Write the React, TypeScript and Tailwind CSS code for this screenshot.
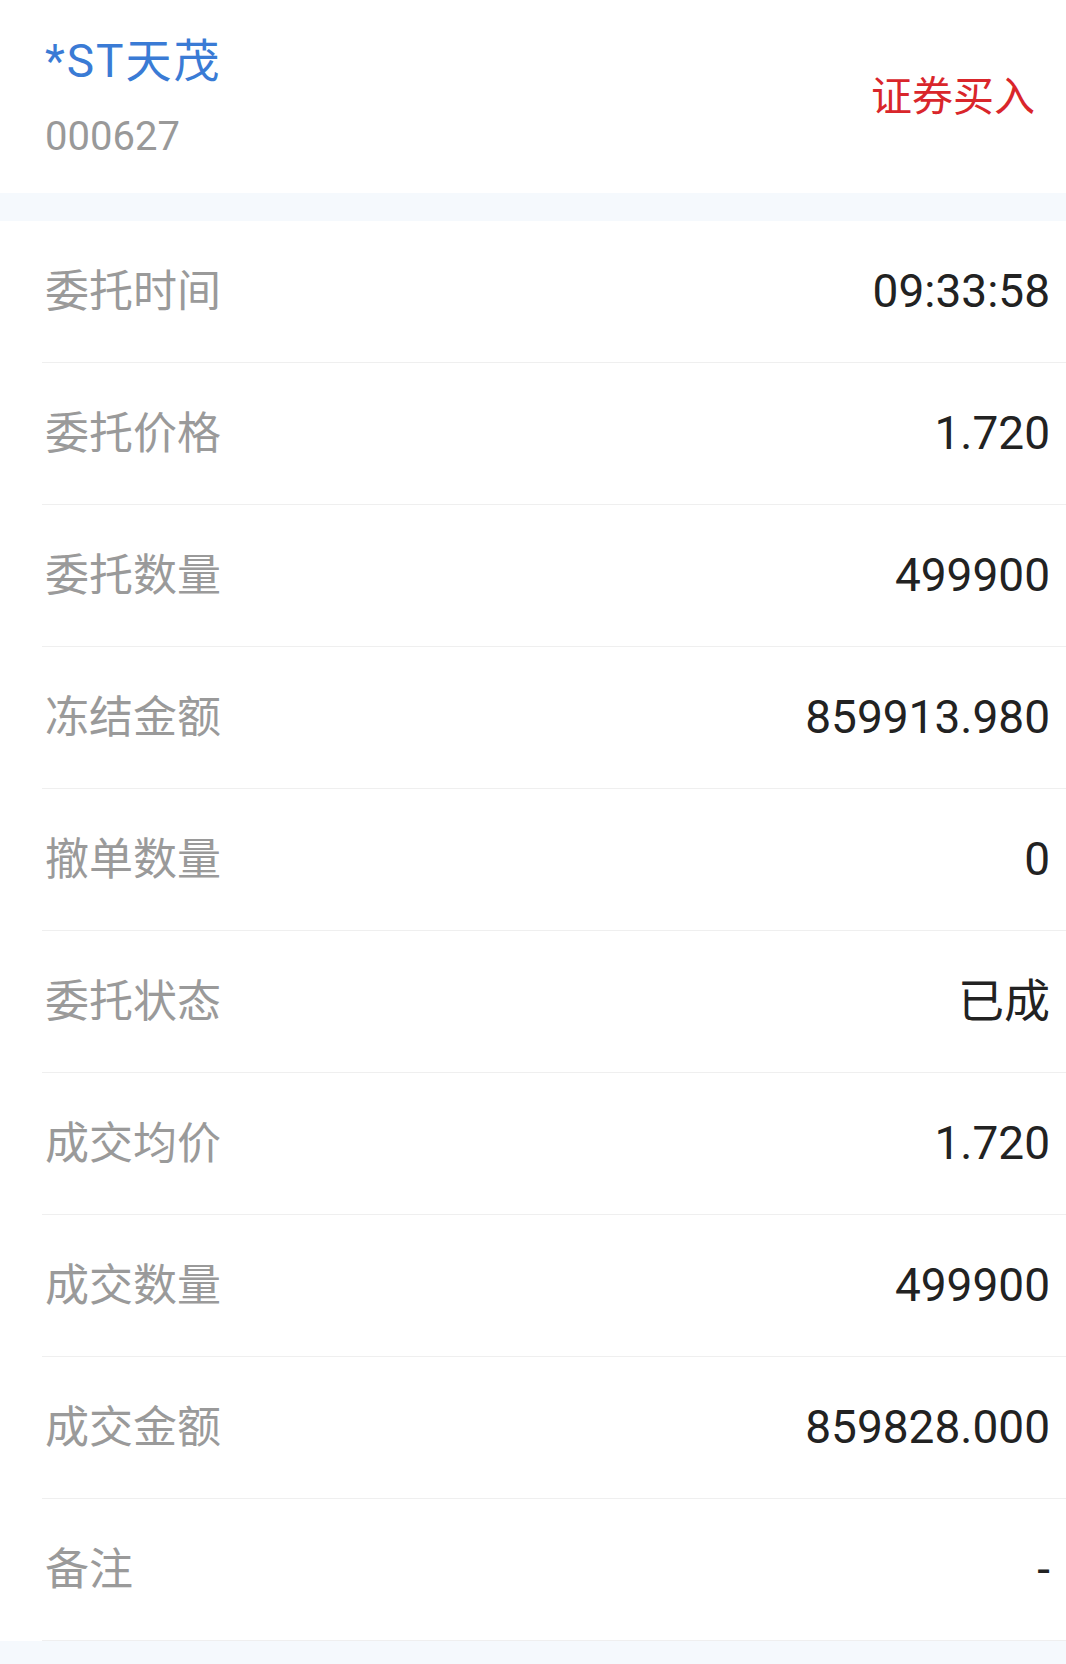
import React from "react";

const rows = [
  { label: "委托时间", value: "09:33:58" },
  { label: "委托价格", value: "1.720" },
  { label: "委托数量", value: "499900" },
  { label: "冻结金额", value: "859913.980" },
  { label: "撤单数量", value: "0" },
  { label: "委托状态", value: "已成" },
  { label: "成交均价", value: "1.720" },
  { label: "成交数量", value: "499900" },
  { label: "成交金额", value: "859828.000" },
  { label: "备注", value: "-" },
];

const App = () => {
  return (
    <div
      className="min-h-screen bg-[#f5f9fd]"
      style={{ fontFamily: '"Roboto", "Noto Sans CJK SC", sans-serif' }}
    >
      {/* header */}
      <div className="bg-white h-[193px] flex items-center justify-between pl-[45px] pr-[31px]">
        <div className="flex flex-col">
          <div className="text-[46px] leading-[52px] tracking-[2px] text-[#3a7bd5]">*ST天茂</div>
          <div className="text-[40px] leading-[44px] text-[#999999] mt-[28px]">000627</div>
        </div>
        <div className="text-[41px] leading-[48px] text-[#d9262b]">证券买入</div>
      </div>

      <div className="h-[28px]" />

      {/* detail rows */}
      <div className="bg-white">
        {rows.map((row, i) => (
          <div
            key={i}
            className="ml-[42px] h-[142px] border-b border-[#efefef] flex items-center justify-between pl-[3px] pr-[16px]"
          >
            <span className="text-[44px] text-[#9a9a9a]">{row.label}</span>
            <span className="text-[46px] text-[#222222]">{row.value}</span>
          </div>
        ))}
      </div>
    </div>
  );
};

export default App;
